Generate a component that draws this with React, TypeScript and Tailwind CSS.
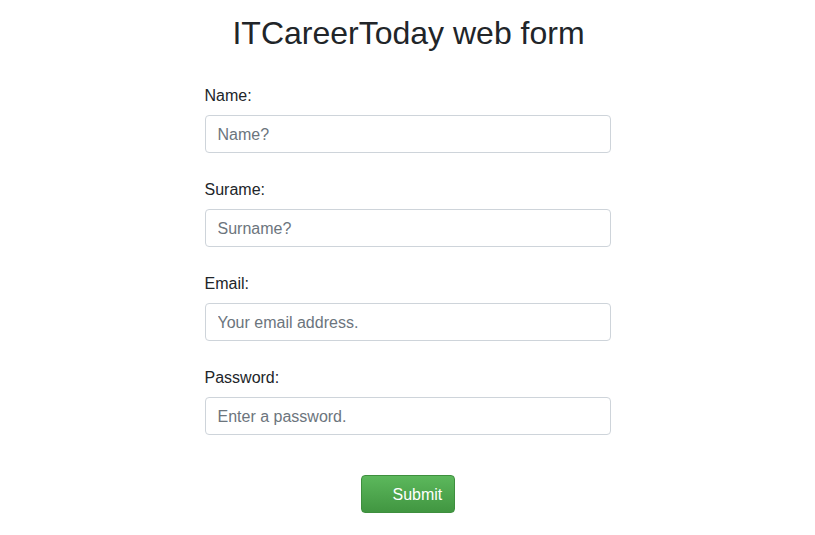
export default function App() {
  const fields = [
    { id: 'name', label: 'Name:', placeholder: 'Name?', type: 'text' },
    { id: 'surname', label: 'Surame:', placeholder: 'Surname?', type: 'text' },
    { id: 'email', label: 'Email:', placeholder: 'Your email address.', type: 'email' },
    { id: 'password', label: 'Password:', placeholder: 'Enter a password.', type: 'password' },
  ];

  return (
    <div className="min-h-screen bg-white text-[#212529] font-['Liberation_Sans',Arial,sans-serif]">
      <h1 className="pt-[14px] pl-[2px] text-center text-[32px] leading-[38.4px] font-normal">ITCareerToday web form</h1>
      <form className="mx-auto mt-[31px] w-[406px] flex flex-col gap-6" onSubmit={(e) => e.preventDefault()}>
        {fields.map((f) => (
          <div key={f.id} className="flex flex-col">
            <label htmlFor={f.id} className="mb-[7px] pt-px text-base leading-6">
              {f.label}
            </label>
            <input
              id={f.id}
              type={f.type}
              placeholder={f.placeholder}
              className="h-[38px] w-full rounded border border-[#ced4da] bg-white px-3 pt-[7px] pb-[5px] text-base leading-6 text-[#495057] placeholder:text-[#6c757d] focus:outline-none"
            />
          </div>
        ))}
        <div className="mt-4 flex justify-center">
          <button
            type="submit"
            className="h-[38px] w-[94px] rounded border border-[#3e8f3e] bg-gradient-to-b from-[#5cb85c] to-[#419641] pl-[31px] pt-[7px] pb-[5px] text-left text-base leading-6 text-white"
          >
            Submit
          </button>
        </div>
      </form>
    </div>
  );
}
